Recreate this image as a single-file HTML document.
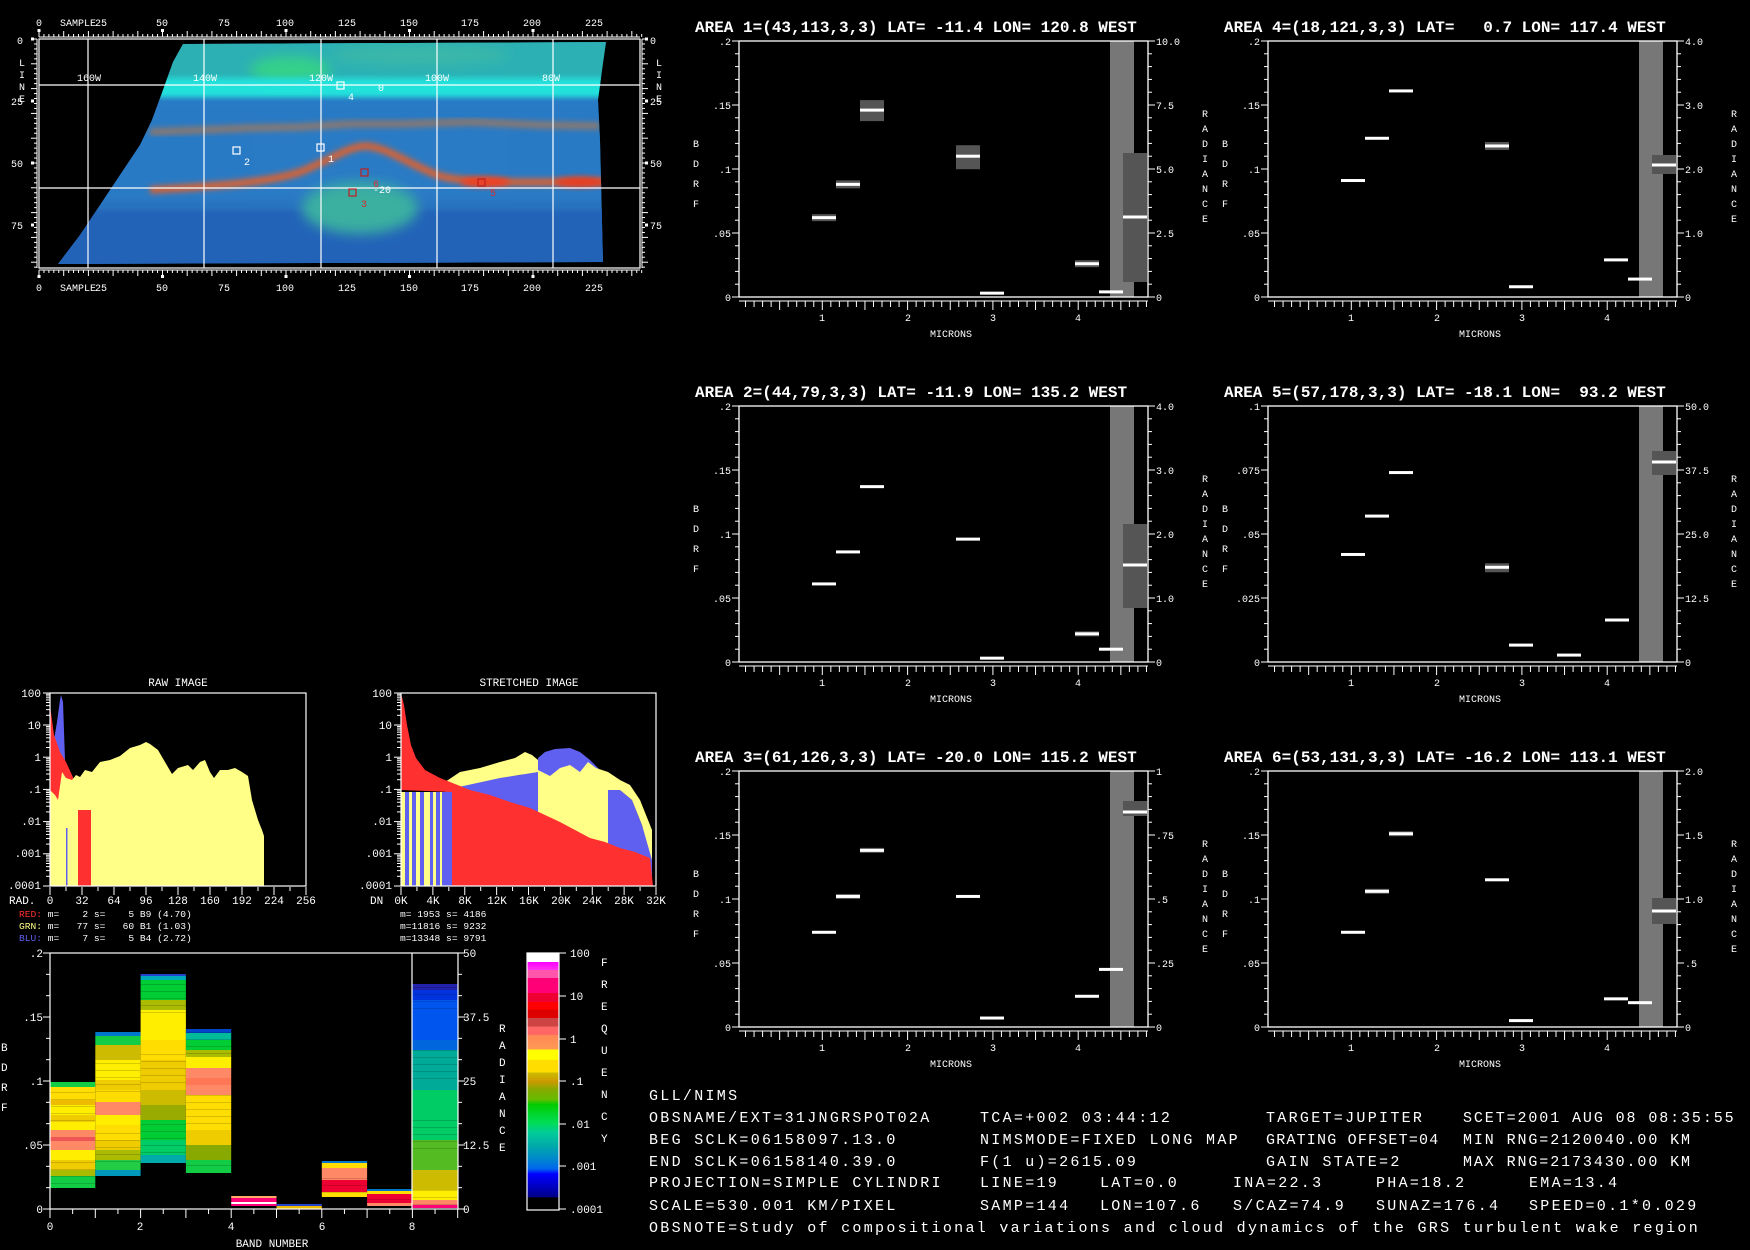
<!DOCTYPE html>
<html><head><meta charset="utf-8"><style>
html,body{margin:0;padding:0;background:#000;}
svg{display:block;}
text{font-family:"Liberation Mono",monospace;fill:#fff;white-space:pre;}
.t{font-size:16px;font-weight:bold;}
.s{font-size:10px;}
.m{font-size:11px;}
.e{text-anchor:end;}
.c{text-anchor:middle;}
.b{font-size:15px;letter-spacing:2.3px;}
</style></head><body>
<svg id="s" width="1750" height="1250" viewBox="0 0 1750 1250" xmlns="http://www.w3.org/2000/svg" xml:space="preserve">
<defs>
<clipPath id="imgclip"><polygon points="183,44 606,42 602,70 598,100 600,140 603,262 58,264 80,235 100,205 120,175 140,145 152,120 163,90 173,62"/></clipPath>
<filter id="bl" x="-20%" y="-50%" width="140%" height="200%"><feGaussianBlur stdDeviation="3"/></filter>
<filter id="bl2" x="-20%" y="-50%" width="140%" height="200%"><feGaussianBlur stdDeviation="6"/></filter>
<linearGradient id="cbar" x1="0" y1="0" x2="0" y2="1">
<stop offset="0" stop-color="#fff"/><stop offset="0.035" stop-color="#fff"/>
<stop offset="0.036" stop-color="#f0f"/><stop offset="0.066" stop-color="#f3e"/>
<stop offset="0.067" stop-color="#f5a"/><stop offset="0.097" stop-color="#f5a"/>
<stop offset="0.098" stop-color="#f07"/><stop offset="0.155" stop-color="#f07"/>
<stop offset="0.156" stop-color="#e03"/><stop offset="0.19" stop-color="#e03"/>
<stop offset="0.191" stop-color="#f00"/><stop offset="0.22" stop-color="#f00"/>
<stop offset="0.221" stop-color="#d00"/><stop offset="0.252" stop-color="#d00"/>
<stop offset="0.253" stop-color="#c44"/><stop offset="0.286" stop-color="#c44"/>
<stop offset="0.287" stop-color="#f66"/><stop offset="0.318" stop-color="#f66"/>
<stop offset="0.319" stop-color="#f85"/><stop offset="0.375" stop-color="#f95"/>
<stop offset="0.376" stop-color="#ff0"/><stop offset="0.415" stop-color="#ff0"/>
<stop offset="0.416" stop-color="#fd0"/><stop offset="0.465" stop-color="#fd0"/>
<stop offset="0.466" stop-color="#cb0"/><stop offset="0.5" stop-color="#c90"/>
<stop offset="0.53" stop-color="#8a0"/><stop offset="0.57" stop-color="#6b0"/>
<stop offset="0.59" stop-color="#0c0"/><stop offset="0.66" stop-color="#0d5"/>
<stop offset="0.7" stop-color="#0c9"/><stop offset="0.75" stop-color="#0aa"/>
<stop offset="0.8" stop-color="#08c"/><stop offset="0.84" stop-color="#06e"/>
<stop offset="0.86" stop-color="#00f"/><stop offset="0.9" stop-color="#00c"/>
<stop offset="0.95" stop-color="#008"/><stop offset="0.951" stop-color="#000"/><stop offset="1" stop-color="#000"/>
</linearGradient>
</defs>
<rect width="1750" height="1250" fill="#000"/>

<!-- ============ IMAGE MAP ============ -->
<g clip-path="url(#imgclip)">
<rect x="40" y="40" width="600" height="230" fill="#2a74c0"/>
<rect x="40" y="40" width="600" height="45" fill="#2cb0b4"/>
<ellipse cx="290" cy="70" rx="40" ry="14" fill="#35d08a" filter="url(#bl2)"/>
<ellipse cx="420" cy="55" rx="90" ry="10" fill="#3ab8a8" filter="url(#bl2)"/>
<rect x="40" y="78" width="600" height="20" fill="#22e2dc" filter="url(#bl)"/>
<rect x="40" y="100" width="600" height="100" fill="#2a7ec8" opacity="0.7" filter="url(#bl)"/>
<rect x="40" y="210" width="600" height="60" fill="#2264b8" filter="url(#bl)"/>
<ellipse cx="360" cy="208" rx="58" ry="26" fill="#3aafa0" filter="url(#bl2)"/>
<polyline points="150,132 250,128 300,127 350,124 400,124 470,122 540,125 600,126" fill="none" stroke="#b87848" stroke-width="7" opacity="0.7" filter="url(#bl)"/>
<path d="M 150 190 C 220 186, 270 182, 300 172 C 330 160, 350 146, 365 146 C 385 146, 410 165, 440 176 C 470 184, 520 182, 640 182" fill="none" stroke="#e0602c" stroke-width="7" filter="url(#bl)"/>
<ellipse cx="485" cy="182" rx="25" ry="5" fill="#f04020" filter="url(#bl)"/>
<ellipse cx="580" cy="182" rx="25" ry="5" fill="#e83c20" filter="url(#bl)"/>
</g>
<g stroke="#fff" stroke-width="1.2" fill="none">
<rect x="39" y="39" width="601" height="229"/>
<line x1="88" y1="39" x2="88" y2="268"/><line x1="204" y1="39" x2="204" y2="268"/>
<line x1="321" y1="39" x2="321" y2="268"/><line x1="437" y1="39" x2="437" y2="268"/>
<line x1="553" y1="39" x2="553" y2="268"/>
<line x1="39" y1="85" x2="640" y2="85"/><line x1="39" y1="188" x2="640" y2="188"/>
<rect x="337" y="82" width="7" height="7"/><rect x="233" y="147" width="7" height="7"/><rect x="317" y="144" width="7" height="7"/>
</g>
<g stroke="#c02020" stroke-width="1.2" fill="none">
<rect x="361" y="169" width="7" height="7"/><rect x="349" y="189" width="7" height="7"/><rect x="478" y="179" width="7" height="7"/>
</g>
<g class="s">
<text x="77" y="81">160W</text><text x="193" y="81">140W</text><text x="309" y="81">120W</text><text x="425" y="81">100W</text><text x="542" y="81">80W</text>
<text x="348" y="100">4</text><text x="378" y="91">0</text><text x="244" y="165">2</text><text x="328" y="162">1</text>
<text x="373" y="187" style="fill:#d03030">6</text><text x="373" y="193">-20</text>
<text x="361" y="207" style="fill:#d03030">3</text><text x="490" y="196" style="fill:#d03030">5</text>
<text x="36" y="26">0</text><text x="60" y="26">SAMPLE</text><text x="95" y="26">25</text><text x="156" y="26">50</text><text x="218" y="26">75</text><text x="276" y="26">100</text><text x="338" y="26">125</text><text x="400" y="26">150</text><text x="461" y="26">175</text><text x="523" y="26">200</text><text x="585" y="26">225</text>
<text x="36" y="291">0</text><text x="60" y="291">SAMPLE</text><text x="95" y="291">25</text><text x="156" y="291">50</text><text x="218" y="291">75</text><text x="276" y="291">100</text><text x="338" y="291">125</text><text x="400" y="291">150</text><text x="461" y="291">175</text><text x="523" y="291">200</text><text x="585" y="291">225</text>
<text x="17" y="44">0</text><text x="11" y="105">25</text><text x="11" y="167">50</text><text x="11" y="229">75</text>
<text x="19" y="66">L</text><text x="19" y="78">I</text><text x="19" y="90">N</text><text x="19" y="102">E</text>
<text x="650" y="44">0</text><text x="650" y="105">25</text><text x="650" y="167">50</text><text x="650" y="229">75</text>
<text x="656" y="66">L</text><text x="656" y="78">I</text><text x="656" y="90">N</text><text x="656" y="102">E</text>
</g>
<g id="rulers" stroke="#fff" stroke-width="1" fill="#fff"></g>

<!-- ============ PANELS ============ -->
<g id="panels" stroke="#fff" fill="none"></g>
<g class="s">
<g transform="translate(0,0)">
<text class="t" x="695" y="32">AREA 1=(43,113,3,3) LAT= -11.4 LON= 120.8 WEST</text>
<text class="e" x="731" y="45">.2</text><text class="e" x="731" y="109">.15</text><text class="e" x="731" y="173">.1</text><text class="e" x="731" y="237">.05</text><text class="e" x="731" y="301">0</text>
<text x="1156" y="45">10.0</text><text x="1156" y="109">7.5</text><text x="1156" y="173">5.0</text><text x="1156" y="237">2.5</text><text x="1156" y="301">0</text>
<text x="693" y="147">B</text><text x="693" y="167">D</text><text x="693" y="187">R</text><text x="693" y="207">F</text>
<text x="1202" y="117">R</text><text x="1202" y="132">A</text><text x="1202" y="147">D</text><text x="1202" y="162">I</text><text x="1202" y="177">A</text><text x="1202" y="192">N</text><text x="1202" y="207">C</text><text x="1202" y="222">E</text>
<text class="c" x="822" y="321">1</text><text class="c" x="908" y="321">2</text><text class="c" x="993" y="321">3</text><text class="c" x="1078" y="321">4</text>
<text class="c" x="951" y="337">MICRONS</text>
</g>
<g transform="translate(529,0)">
<text class="t" x="695" y="32">AREA 4=(18,121,3,3) LAT=   0.7 LON= 117.4 WEST</text>
<text class="e" x="731" y="45">.2</text><text class="e" x="731" y="109">.15</text><text class="e" x="731" y="173">.1</text><text class="e" x="731" y="237">.05</text><text class="e" x="731" y="301">0</text>
<text x="1156" y="45">4.0</text><text x="1156" y="109">3.0</text><text x="1156" y="173">2.0</text><text x="1156" y="237">1.0</text><text x="1156" y="301">0</text>
<text x="693" y="147">B</text><text x="693" y="167">D</text><text x="693" y="187">R</text><text x="693" y="207">F</text>
<text x="1202" y="117">R</text><text x="1202" y="132">A</text><text x="1202" y="147">D</text><text x="1202" y="162">I</text><text x="1202" y="177">A</text><text x="1202" y="192">N</text><text x="1202" y="207">C</text><text x="1202" y="222">E</text>
<text class="c" x="822" y="321">1</text><text class="c" x="908" y="321">2</text><text class="c" x="993" y="321">3</text><text class="c" x="1078" y="321">4</text>
<text class="c" x="951" y="337">MICRONS</text>
</g>
<g transform="translate(0,365)">
<text class="t" x="695" y="32">AREA 2=(44,79,3,3) LAT= -11.9 LON= 135.2 WEST</text>
<text class="e" x="731" y="45">.2</text><text class="e" x="731" y="109">.15</text><text class="e" x="731" y="173">.1</text><text class="e" x="731" y="237">.05</text><text class="e" x="731" y="301">0</text>
<text x="1156" y="45">4.0</text><text x="1156" y="109">3.0</text><text x="1156" y="173">2.0</text><text x="1156" y="237">1.0</text><text x="1156" y="301">0</text>
<text x="693" y="147">B</text><text x="693" y="167">D</text><text x="693" y="187">R</text><text x="693" y="207">F</text>
<text x="1202" y="117">R</text><text x="1202" y="132">A</text><text x="1202" y="147">D</text><text x="1202" y="162">I</text><text x="1202" y="177">A</text><text x="1202" y="192">N</text><text x="1202" y="207">C</text><text x="1202" y="222">E</text>
<text class="c" x="822" y="321">1</text><text class="c" x="908" y="321">2</text><text class="c" x="993" y="321">3</text><text class="c" x="1078" y="321">4</text>
<text class="c" x="951" y="337">MICRONS</text>
</g>
<g transform="translate(529,365)">
<text class="t" x="695" y="32">AREA 5=(57,178,3,3) LAT= -18.1 LON=  93.2 WEST</text>
<text class="e" x="731" y="45">.1</text><text class="e" x="731" y="109">.075</text><text class="e" x="731" y="173">.05</text><text class="e" x="731" y="237">.025</text><text class="e" x="731" y="301">0</text>
<text x="1156" y="45">50.0</text><text x="1156" y="109">37.5</text><text x="1156" y="173">25.0</text><text x="1156" y="237">12.5</text><text x="1156" y="301">0</text>
<text x="693" y="147">B</text><text x="693" y="167">D</text><text x="693" y="187">R</text><text x="693" y="207">F</text>
<text x="1202" y="117">R</text><text x="1202" y="132">A</text><text x="1202" y="147">D</text><text x="1202" y="162">I</text><text x="1202" y="177">A</text><text x="1202" y="192">N</text><text x="1202" y="207">C</text><text x="1202" y="222">E</text>
<text class="c" x="822" y="321">1</text><text class="c" x="908" y="321">2</text><text class="c" x="993" y="321">3</text><text class="c" x="1078" y="321">4</text>
<text class="c" x="951" y="337">MICRONS</text>
</g>
<g transform="translate(0,730)">
<text class="t" x="695" y="32">AREA 3=(61,126,3,3) LAT= -20.0 LON= 115.2 WEST</text>
<text class="e" x="731" y="45">.2</text><text class="e" x="731" y="109">.15</text><text class="e" x="731" y="173">.1</text><text class="e" x="731" y="237">.05</text><text class="e" x="731" y="301">0</text>
<text x="1156" y="45">1</text><text x="1156" y="109">.75</text><text x="1156" y="173">.5</text><text x="1156" y="237">.25</text><text x="1156" y="301">0</text>
<text x="693" y="147">B</text><text x="693" y="167">D</text><text x="693" y="187">R</text><text x="693" y="207">F</text>
<text x="1202" y="117">R</text><text x="1202" y="132">A</text><text x="1202" y="147">D</text><text x="1202" y="162">I</text><text x="1202" y="177">A</text><text x="1202" y="192">N</text><text x="1202" y="207">C</text><text x="1202" y="222">E</text>
<text class="c" x="822" y="321">1</text><text class="c" x="908" y="321">2</text><text class="c" x="993" y="321">3</text><text class="c" x="1078" y="321">4</text>
<text class="c" x="951" y="337">MICRONS</text>
</g>
<g transform="translate(529,730)">
<text class="t" x="695" y="32">AREA 6=(53,131,3,3) LAT= -16.2 LON= 113.1 WEST</text>
<text class="e" x="731" y="45">.2</text><text class="e" x="731" y="109">.15</text><text class="e" x="731" y="173">.1</text><text class="e" x="731" y="237">.05</text><text class="e" x="731" y="301">0</text>
<text x="1156" y="45">2.0</text><text x="1156" y="109">1.5</text><text x="1156" y="173">1.0</text><text x="1156" y="237">.5</text><text x="1156" y="301">0</text>
<text x="693" y="147">B</text><text x="693" y="167">D</text><text x="693" y="187">R</text><text x="693" y="207">F</text>
<text x="1202" y="117">R</text><text x="1202" y="132">A</text><text x="1202" y="147">D</text><text x="1202" y="162">I</text><text x="1202" y="177">A</text><text x="1202" y="192">N</text><text x="1202" y="207">C</text><text x="1202" y="222">E</text>
<text class="c" x="822" y="321">1</text><text class="c" x="908" y="321">2</text><text class="c" x="993" y="321">3</text><text class="c" x="1078" y="321">4</text>
<text class="c" x="951" y="337">MICRONS</text>
</g>
</g>

<!-- ============ HISTOGRAMS ============ -->
<g>
<polygon fill="#6060f0" points="52,790 54,740 57,722 60,700 61,695 63,702 65,760 66,790"/>
<polygon fill="#ff3030" points="50,886 50,705 54,735 60,752 66,762 72,775 78,790 80,805 86,810 91,820 91,886"/>
<polygon fill="#ffff88" points="50,886 50,790 55,795 58,800 62,772 66,778 72,780 76,775 80,777 85,770 92,772 100,762 110,760 120,756 130,748 140,745 146,742 150,744 158,750 165,762 172,774 178,768 188,765 193,770 200,762 205,760 210,772 214,778 220,770 228,770 235,768 242,772 248,776 252,800 258,820 262,830 264,836 264,886"/>
<rect x="78" y="810" width="13" height="76" fill="#ff3030"/>
<rect x="66" y="828" width="1.5" height="58" fill="#6060f0"/>
<polygon fill="#6060f0" points="445,886 445,790 460,785 480,780 500,777 520,775 538,770 538,758 545,752 555,749 570,748 580,752 590,760 600,770 608,775 608,790 620,790 632,800 642,825 650,850 652,860 652,886"/>
<polygon fill="#ffff88" points="538,886 538,770 550,776 560,768 570,765 580,772 588,762 596,768 608,772 608,886"/>
<polygon fill="#ffff88" points="445,782 460,772 480,768 500,762 515,758 525,752 532,755 538,760 538,772 500,778 445,790"/>
<polygon fill="#ffff88" points="608,772 620,780 630,785 640,800 648,820 652,830 652,860 642,825 632,800 620,790 608,790"/>
<polygon fill="#ff3030" points="401,790 401,693 404,705 407,725 411,745 416,758 425,770 440,778 450,782 470,790 490,795 510,802 530,808 545,815 560,822 575,830 590,838 605,842 620,848 635,852 650,858 653,886 452,886 452,792"/>
<g id="stripes"></g>
<g stroke="#fff" stroke-width="1.2" fill="none">
<rect x="50" y="693" width="256" height="193"/>
<rect x="401" y="693" width="255" height="193"/>
</g>
<g id="histticks" stroke="#fff" stroke-width="1"></g>
<g class="m">
<text class="c" x="178" y="686">RAW IMAGE</text>
<text class="c" x="529" y="686">STRETCHED IMAGE</text>
<text class="e" x="41" y="697">100</text><text class="e" x="41" y="729">10</text><text class="e" x="41" y="761">1</text><text class="e" x="41" y="793">.1</text><text class="e" x="41" y="825">.01</text><text class="e" x="41" y="857">.001</text><text class="e" x="41" y="889">.0001</text>
<text class="e" x="392" y="697">100</text><text class="e" x="392" y="729">10</text><text class="e" x="392" y="761">1</text><text class="e" x="392" y="793">.1</text><text class="e" x="392" y="825">.01</text><text class="e" x="392" y="857">.001</text><text class="e" x="392" y="889">.0001</text>
<text x="9" y="904">RAD.</text>
<text class="c" x="50" y="904">0</text><text class="c" x="82" y="904">32</text><text class="c" x="114" y="904">64</text><text class="c" x="146" y="904">96</text><text class="c" x="178" y="904">128</text><text class="c" x="210" y="904">160</text><text class="c" x="242" y="904">192</text><text class="c" x="274" y="904">224</text><text class="c" x="306" y="904">256</text>
<text x="370" y="904">DN</text>
<text class="c" x="401" y="904">0K</text><text class="c" x="433" y="904">4K</text><text class="c" x="465" y="904">8K</text><text class="c" x="497" y="904">12K</text><text class="c" x="529" y="904">16K</text><text class="c" x="561" y="904">20K</text><text class="c" x="592" y="904">24K</text><text class="c" x="624" y="904">28K</text><text class="c" x="656" y="904">32K</text>
</g>
<g style="font-size:9.6px">
<text x="19" y="917"><tspan style="fill:#ff3030">RED:</tspan> m=    2 s=    5 B9 (4.70)</text>
<text x="19" y="929"><tspan style="fill:#ffff88">GRN:</tspan> m=   77 s=   60 B1 (1.03)</text>
<text x="19" y="941"><tspan style="fill:#6060f0">BLU:</tspan> m=    7 s=    5 B4 (2.72)</text>
<text x="400" y="917">m= 1953 s= 4186</text>
<text x="400" y="929">m=11816 s= 9232</text>
<text x="400" y="941">m=13348 s= 9791</text>
</g>
</g>

<!-- ============ BAND CHART ============ -->
<g id="bands"></g>
<g stroke="#fff" stroke-width="1.2" fill="none">
<rect x="50" y="953" width="408" height="256"/>
<line x1="412" y1="953" x2="412" y2="1209"/>
<rect x="527" y="953" width="32" height="257" fill="url(#cbar)"/>
</g>
<g id="bandticks" stroke="#fff" stroke-width="1"></g>
<g class="m">
<text class="e" x="43" y="957">.2</text><text class="e" x="43" y="1021">.15</text><text class="e" x="43" y="1085">.1</text><text class="e" x="43" y="1149">.05</text><text class="e" x="43" y="1213">0</text>
<text x="463" y="957">50</text><text x="463" y="1021">37.5</text><text x="463" y="1085">25</text><text x="463" y="1149">12.5</text><text x="463" y="1213">0</text>
<text x="1" y="1051">B</text><text x="1" y="1071">D</text><text x="1" y="1091">R</text><text x="1" y="1111">F</text>
<text x="499" y="1032">R</text><text x="499" y="1049">A</text><text x="499" y="1066">D</text><text x="499" y="1083">I</text><text x="499" y="1100">A</text><text x="499" y="1117">N</text><text x="499" y="1134">C</text><text x="499" y="1151">E</text>
<text class="c" x="50" y="1230">0</text><text class="c" x="140" y="1230">2</text><text class="c" x="231" y="1230">4</text><text class="c" x="322" y="1230">6</text><text class="c" x="412" y="1230">8</text>
<text class="c" x="272" y="1247">BAND NUMBER</text>
<text x="570" y="957">100</text><text x="570" y="1000">10</text><text x="570" y="1043">1</text><text x="570" y="1085">.1</text><text x="570" y="1128">.01</text><text x="570" y="1170">.001</text><text x="570" y="1213">.0001</text>
<text x="601" y="966">F</text><text x="601" y="988">R</text><text x="601" y="1010">E</text><text x="601" y="1032">Q</text><text x="601" y="1054">U</text><text x="601" y="1076">E</text><text x="601" y="1098">N</text><text x="601" y="1120">C</text><text x="601" y="1142">Y</text>
</g>

<!-- ============ TEXT BLOCK ============ -->
<g class="b">
<text x="649" y="1100">GLL/NIMS</text>
<text x="649" y="1122">OBSNAME/EXT=31JNGRSPOT02A</text><text x="980" y="1122">TCA=+002 03:44:12</text><text x="1266" y="1122">TARGET=JUPITER</text><text x="1463" y="1122" style="letter-spacing:1.9px">SCET=2001 AUG 08 08:35:55</text>
<text x="649" y="1144">BEG SCLK=06158097.13.0</text><text x="980" y="1144">NIMSMODE=FIXED LONG MAP</text><text x="1266" y="1144" style="letter-spacing:1.2px">GRATING OFFSET=04</text><text x="1463" y="1144" style="letter-spacing:1.9px">MIN RNG=2120040.00 KM</text>
<text x="649" y="1166">END SCLK=06158140.39.0</text><text x="980" y="1166">F(1 u)=2615.09</text><text x="1266" y="1166">GAIN STATE=2</text><text x="1463" y="1166" style="letter-spacing:1.9px">MAX RNG=2173430.00 KM</text>
<text x="649" y="1187">PROJECTION=SIMPLE CYLINDRI</text><text x="980" y="1187">LINE=19</text><text x="1100" y="1187">LAT=0.0</text><text x="1233" y="1187">INA=22.3</text><text x="1376" y="1187">PHA=18.2</text><text x="1529" y="1187">EMA=13.4</text>
<text x="649" y="1210">SCALE=530.001 KM/PIXEL</text><text x="980" y="1210">SAMP=144</text><text x="1100" y="1210">LON=107.6</text><text x="1233" y="1210">S/CAZ=74.9</text><text x="1376" y="1210">SUNAZ=176.4</text><text x="1529" y="1210">SPEED=0.1*0.029</text>
<text x="649" y="1232">OBSNOTE=Study of compositional variations and cloud dynamics of the GRS turbulent wake region</text>
</g>
</svg>
<script>
(function(){
var NS="http://www.w3.org/2000/svg";
function el(parent,tag,a){var e=document.createElementNS(NS,tag);for(var k in a)e.setAttribute(k,a[k]);parent.appendChild(e);return e;}
function ln(p,x1,y1,x2,y2,c,w){return el(p,'line',{x1:x1,y1:y1,x2:x2,y2:y2,stroke:c||'#fff','stroke-width':w||1});}
function rc(p,x,y,w,h,f){return el(p,'rect',{x:x,y:y,width:w,height:h,fill:f,stroke:'none'});}

var R=document.getElementById('rulers');
ln(R,39,37,640,37);ln(R,39,270,640,270);ln(R,37,39,37,268);ln(R,642,39,642,268);
for(var s=0;s<=244;s+=2){var x=39+s*2.47;var L=(s%10==0)?6:3;ln(R,x,37,x,37-L);ln(R,x,270,x,270+L);
 if(s%25==0){rc(R,x-1.5,29,3,3,'#fff');rc(R,x-1.5,275,3,3,'#fff');}}
for(var l=0;l<=92;l+=2){var y=39+l*2.48;var L=(l%10==0)?6:3;ln(R,37,y,37-L,y);ln(R,642,y,642+L,y);}
[0,25,50,75].forEach(function(l){var y=39+l*2.48;rc(R,31,y-1.5,3,3,'#fff');rc(R,645,y-1.5,3,3,'#fff');});

var P=document.getElementById('panels');
var rel=[73,97,121,217,241,336,360];
var panels=[
 {dx:0,dy:0,vm:.2,v:[.062,.088,.146,.11,.003,.026,.004],g:[[3.5,3.5],[4,4],[10,11],[11,13],0,[3.5,3.5],0],d:[112,241,176]},
 {dx:529,dy:0,vm:.2,v:[.091,.124,.161,.118,.008,.029,.014],g:[0,0,0,[4,4],0,0,0],d:[114,133,124]},
 {dx:0,dy:365,vm:.2,v:[.061,.086,.137,.096,.003,.022,.01],g:[0,0,0,0,0,[2.5,2.5],0],d:[118,202,159]},
 {dx:529,dy:365,vm:.1,x:[73,97,121,217,241,289,337],v:[.042,.057,.074,.037,.0066,.0027,.0164],g:[0,0,0,[4,5],0,0,0],d:[45,69,56]},
 {dx:0,dy:730,vm:.2,v:[.074,.102,.138,.102,.007,.024,.045],g:[0,[2.5,2.5],[2.5,2.5],0,0,0,0],d:[30,45,41]},
 {dx:529,dy:730,vm:.2,v:[.074,.106,.151,.115,.005,.022,.019],g:[0,[2.5,2.5],[2.5,2.5],0,0,0,0],d:[127,153,140]}
];
panels.forEach(function(p){
 var G=el(P,'g',{transform:'translate('+p.dx+','+p.dy+')'});
 var L=739,T=41,B=297,Rt=1148;
 rc(G,L+371,T,24,B-T,'#777');
 rc(G,L+384,T+p.d[0],24,p.d[1]-p.d[0],'#555');
 rc(G,L+384,T+p.d[2]-1.5,24,3,'#fff');
 var xs=p.x||rel;
 for(var i=0;i<7;i++){
  var y=B-(p.v[i]/p.vm)*256;
  if(p.g[i]){rc(G,L+xs[i],y-p.g[i][0],24,p.g[i][0]+p.g[i][1],'#555');}
  rc(G,L+xs[i],y-1.5,24,3,'#fff');
 }
 el(G,'rect',{x:L,y:T,width:Rt-L,height:B-T,fill:'none',stroke:'#fff','stroke-width':1.3});
 for(var k=0;k<=20;k++){var y=T+k*12.8;var len=(k%5==0)?7:4;ln(G,L,y,L-len,y);ln(G,Rt,y,Rt+len,y);}
 ln(G,L,301,Rt,301);
 for(var m=0.1;m<4.85;m+=0.1){var x=737+85.3*m;if(x<L||x>Rt)continue;var r=Math.round(m*10);var len=(r%5==0)?9:6;ln(G,x,301,x,301+len);}
});

var H=document.getElementById('histticks');
[50,401].forEach(function(x0){
 for(var d=0;d<6;d++){var yb=886-d*32.2;ln(H,x0,yb,x0-7,yb);
  for(var n=2;n<10;n++){var y=yb-Math.log10(n)*32.2;ln(H,x0,y,x0-4,y);}}
 ln(H,x0,693,x0-7,693);
 var w=(x0==50)?256:255;
 for(var k=0;k<=16;k++){var x=x0+k*w/16;ln(H,x,887,x,k%2==0?895:891);}
});
var ST=document.getElementById('stripes');
var st=[['#ffff88',401,405],['#6060f0',405,409],['#ffff88',409,412],['#6060f0',412,416],['#ffff88',416,420],['#6060f0',420,424],['#ffff88',424,430],['#6060f0',430,433],['#ffff88',433,436],['#6060f0',436,440],['#ffff88',440,442],['#6060f0',442,452]];
st.forEach(function(a){rc(ST,a[1],792,a[2]-a[1],94,a[0]);});

var BD=document.getElementById('bands');
var bands=[
 [[1082,'#1c4'],[1087,'#fd0'],[1100,'#eb0'],[1105,'#fe0'],[1115,'#ec0'],[1122,'#fe0'],[1130,'#f86'],[1137,'#e55'],[1141,'#f86'],[1150,'#fe0'],[1160,'#ec0'],[1170,'#ab0'],[1176,'#1c4'],[1188]],
 [[1032,'#07c'],[1036,'#1c4'],[1045,'#cb0'],[1060,'#fe0'],[1080,'#ec0'],[1090,'#fd0'],[1102,'#f86'],[1115,'#fe0'],[1125,'#fd0'],[1140,'#ec0'],[1150,'#ab0'],[1160,'#2c4'],[1170,'#09b'],[1176]],
 [[974,'#24c'],[976,'#0ab'],[980,'#0c3'],[1000,'#ab0'],[1010,'#fe0'],[1040,'#fd0'],[1060,'#ec0'],[1090,'#cb0'],[1105,'#9a0'],[1120,'#0c3'],[1140,'#0c6'],[1155,'#0aa'],[1163]],
 [[1029,'#04c'],[1033,'#0b9'],[1040,'#0c3'],[1050,'#ab0'],[1057,'#fe0'],[1068,'#f86'],[1078,'#f75'],[1085,'#f86'],[1095,'#fd0'],[1130,'#ec0'],[1145,'#8a0'],[1160,'#1c4'],[1173]],
 [[1196,'#fa6'],[1198,'#f07'],[1202,'#fff'],[1204,'#f07'],[1206]],
 [[1204,'#24c'],[1206,'#eb0'],[1209]],
 [[1161,'#07c'],[1163,'#fd0'],[1168,'#f86'],[1180,'#e03'],[1192,'#fd0'],[1197]],
 [[1189,'#07c'],[1191,'#fd0'],[1194,'#e03'],[1203,'#f86'],[1206]],
 [[984,'#22a'],[990,'#03d'],[1000,'#05e'],[1040,'#06d'],[1050,'#0a9'],[1090,'#0c6'],[1140,'#5b2'],[1170,'#cb0'],[1190,'#fe0'],[1200,'#f86'],[1205,'#f07'],[1208]]
];
bands.forEach(function(b,i){
 var x=50+i*45.3,w=(i==8)?46:45.3;
 for(var j=0;j<b.length-1;j++){rc(BD,x,b[j][0],w,b[j+1][0]-b[j][0],b[j][1]);}
 for(var y=b[0][0]+3;y<b[b.length-1][0]-2;y+=7){if(((y*7+i*13)%10)<5)rc(BD,x,y,w,1,'rgba(0,0,0,0.15)');}
});
var BT=document.getElementById('bandticks');
for(var k=0;k<=12;k++){var y=953+k*256/12;var len=(k%3==0)?7:4;ln(BT,50,y,50-len,y);ln(BT,458,y,458+len,y);}
for(var k=0;k<=18;k++){var x=50+k*22.65;ln(BT,x,1209,x,(k%2==0)?1218:1214);}
[953,996,1039,1081,1124,1166,1209].forEach(function(y){ln(BT,559,y,566,y);});
})();
</script>
</body></html>
